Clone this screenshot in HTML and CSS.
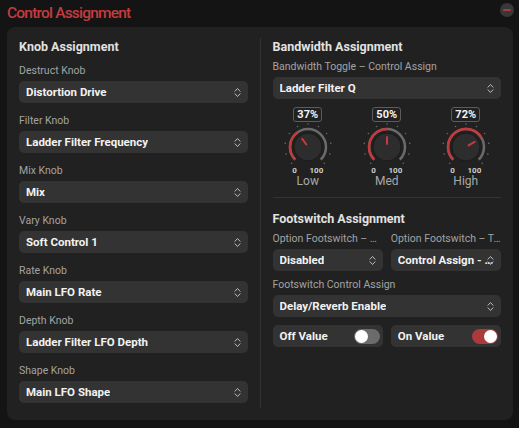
FILE: index.html
```html
<!DOCTYPE html>
<html lang="en">
<head>
<meta charset="utf-8">
<title>Control Assignment</title>
<link rel="stylesheet" href="styles.css">
</head>
<body>
<div class="window">
  <header class="titlebar">
    <h1 class="title">Control Assignment</h1>
    <button class="close" aria-label="Close"><span class="close-bar"></span></button>
  </header>

  <main class="panel">
    <section class="col">
      <h2 class="heading heading-knobs">Knob Assignment</h2>

      <div class="field">
        <label class="label">Destruct Knob</label>
        <div class="select"><span class="select-text">Distortion Drive</span><svg class="chev" viewBox="0 0 7 11"><path d="M1 4.2 L3.5 1.5 L6 4.2 M1 6.8 L3.5 9.5 L6 6.8"/></svg></div>
      </div>
      <div class="field">
        <label class="label">Filter Knob</label>
        <div class="select"><span class="select-text">Ladder Filter Frequency</span><svg class="chev" viewBox="0 0 7 11"><path d="M1 4.2 L3.5 1.5 L6 4.2 M1 6.8 L3.5 9.5 L6 6.8"/></svg></div>
      </div>
      <div class="field">
        <label class="label">Mix Knob</label>
        <div class="select"><span class="select-text">Mix</span><svg class="chev" viewBox="0 0 7 11"><path d="M1 4.2 L3.5 1.5 L6 4.2 M1 6.8 L3.5 9.5 L6 6.8"/></svg></div>
      </div>
      <div class="field">
        <label class="label">Vary Knob</label>
        <div class="select"><span class="select-text">Soft Control 1</span><svg class="chev" viewBox="0 0 7 11"><path d="M1 4.2 L3.5 1.5 L6 4.2 M1 6.8 L3.5 9.5 L6 6.8"/></svg></div>
      </div>
      <div class="field">
        <label class="label">Rate Knob</label>
        <div class="select"><span class="select-text">Main LFO Rate</span><svg class="chev" viewBox="0 0 7 11"><path d="M1 4.2 L3.5 1.5 L6 4.2 M1 6.8 L3.5 9.5 L6 6.8"/></svg></div>
      </div>
      <div class="field">
        <label class="label">Depth Knob</label>
        <div class="select"><span class="select-text">Ladder Filter LFO Depth</span><svg class="chev" viewBox="0 0 7 11"><path d="M1 4.2 L3.5 1.5 L6 4.2 M1 6.8 L3.5 9.5 L6 6.8"/></svg></div>
      </div>
      <div class="field">
        <label class="label">Shape Knob</label>
        <div class="select"><span class="select-text">Main LFO Shape</span><svg class="chev" viewBox="0 0 7 11"><path d="M1 4.2 L3.5 1.5 L6 4.2 M1 6.8 L3.5 9.5 L6 6.8"/></svg></div>
      </div>
    </section>

    <div class="vrule"></div>

    <section class="col">
      <h2 class="heading heading-bw">Bandwidth Assignment</h2>
      <div class="field">
        <label class="label">Bandwidth Toggle – Control Assign</label>
        <div class="select"><span class="select-text">Ladder Filter Q</span><svg class="chev" viewBox="0 0 7 11"><path d="M1 4.2 L3.5 1.5 L6 4.2 M1 6.8 L3.5 9.5 L6 6.8"/></svg></div>
      </div>

      <div class="dials">
        <div class="dial">
          <div class="dial-value">37%</div>
          <svg class="dial-svg" viewBox="0 0 54 44">
            <g class="ticks">
              <circle cx="10.74" cy="40.26" r="0.8"/><circle cx="5.12" cy="31.11" r="0.8"/><circle cx="4.28" cy="20.4" r="0.8"/><circle cx="8.39" cy="10.48" r="0.8"/><circle cx="16.56" cy="3.51" r="0.8"/><circle cx="27" cy="1" r="0.8"/><circle cx="37.44" cy="3.51" r="0.8"/><circle cx="45.61" cy="10.48" r="0.8"/><circle cx="49.72" cy="20.4" r="0.8"/><circle cx="48.88" cy="31.11" r="0.8"/><circle cx="43.26" cy="40.26" r="0.8"/>
            </g>
            <path class="track" d="M14.27 36.73 A18 18 0 1 1 39.73 36.73"/>
            <path class="fill" d="M14.27 36.73 A18 18 0 0 1 16.65 9.27"/>
            <circle class="body" cx="27" cy="24" r="14"/>
            <line class="needle" x1="25.27" y1="21.55" x2="21.25" y2="15.82"/>
          </svg>
          <div class="dial-scale"><span>0</span><span>100</span></div>
          <div class="dial-name">Low</div>
        </div>
        <div class="dial">
          <div class="dial-value">50%</div>
          <svg class="dial-svg" viewBox="0 0 54 44">
            <g class="ticks">
              <circle cx="10.74" cy="40.26" r="0.8"/><circle cx="5.12" cy="31.11" r="0.8"/><circle cx="4.28" cy="20.4" r="0.8"/><circle cx="8.39" cy="10.48" r="0.8"/><circle cx="16.56" cy="3.51" r="0.8"/><circle cx="27" cy="1" r="0.8"/><circle cx="37.44" cy="3.51" r="0.8"/><circle cx="45.61" cy="10.48" r="0.8"/><circle cx="49.72" cy="20.4" r="0.8"/><circle cx="48.88" cy="31.11" r="0.8"/><circle cx="43.26" cy="40.26" r="0.8"/>
            </g>
            <path class="track" d="M14.27 36.73 A18 18 0 1 1 39.73 36.73"/>
            <path class="fill" d="M14.27 36.73 A18 18 0 0 1 27 6"/>
            <circle class="body" cx="27" cy="24" r="14"/>
            <line class="needle" x1="27" y1="21" x2="27" y2="14"/>
          </svg>
          <div class="dial-scale"><span>0</span><span>100</span></div>
          <div class="dial-name">Med</div>
        </div>
        <div class="dial">
          <div class="dial-value">72%</div>
          <svg class="dial-svg" viewBox="0 0 54 44">
            <g class="ticks">
              <circle cx="10.74" cy="40.26" r="0.8"/><circle cx="5.12" cy="31.11" r="0.8"/><circle cx="4.28" cy="20.4" r="0.8"/><circle cx="8.39" cy="10.48" r="0.8"/><circle cx="16.56" cy="3.51" r="0.8"/><circle cx="27" cy="1" r="0.8"/><circle cx="37.44" cy="3.51" r="0.8"/><circle cx="45.61" cy="10.48" r="0.8"/><circle cx="49.72" cy="20.4" r="0.8"/><circle cx="48.88" cy="31.11" r="0.8"/><circle cx="43.26" cy="40.26" r="0.8"/>
            </g>
            <path class="track" d="M14.27 36.73 A18 18 0 1 1 39.73 36.73"/>
            <path class="fill" d="M14.27 36.73 A18 18 0 1 1 42.5 14.84"/>
            <circle class="body" cx="27" cy="24" r="14"/>
            <line class="needle" x1="29.58" y1="22.47" x2="35.61" y2="18.91"/>
          </svg>
          <div class="dial-scale"><span>0</span><span>100</span></div>
          <div class="dial-name">High</div>
        </div>
      </div>

      <hr class="hrule">

      <h2 class="heading heading-fs">Footswitch Assignment</h2>
      <div class="pair pair-selects">
        <div class="field">
          <label class="label">Option Footswitch – Mode</label>
          <div class="select"><span class="select-text">Disabled</span><svg class="chev" viewBox="0 0 7 11"><path d="M1 4.2 L3.5 1.5 L6 4.2 M1 6.8 L3.5 9.5 L6 6.8"/></svg></div>
        </div>
        <div class="field">
          <label class="label">Option Footswitch – Tap</label>
          <div class="select"><span class="select-text">Control Assign - Latch</span><svg class="chev" viewBox="0 0 7 11"><path d="M1 4.2 L3.5 1.5 L6 4.2 M1 6.8 L3.5 9.5 L6 6.8"/></svg></div>
        </div>
      </div>
      <div class="field field-fs">
        <label class="label">Footswitch Control Assign</label>
        <div class="select"><span class="select-text">Delay/Reverb Enable</span><svg class="chev" viewBox="0 0 7 11"><path d="M1 4.2 L3.5 1.5 L6 4.2 M1 6.8 L3.5 9.5 L6 6.8"/></svg></div>
      </div>
      <div class="pair pair-toggles">
        <div class="toggle-row"><span>Off Value</span><span class="switch"><span class="switch-knob"></span></span></div>
        <div class="toggle-row"><span>On Value</span><span class="switch is-on"><span class="switch-knob"></span></span></div>
      </div>
    </section>
  </main>
</div>
</body>
</html>
```

FILE: styles.css
```css
* {
  box-sizing: border-box;
}

html, body {
  margin: 0;
  padding: 0;
}

body {
  width: 519px;
  height: 428px;
  overflow: hidden;
  background: #141414;
  font-family: Roboto, "Noto Sans", sans-serif;
  color: #ececec;
}

.titlebar {
  height: 27px;
  display: flex;
  justify-content: space-between;
  align-items: flex-start;
  padding: 0 5px 0 7px;
}

.title {
  margin: 0;
  font-size: 15.5px;
  line-height: 27px;
  font-weight: 500;
  letter-spacing: -0.8px;
  color: #c43c3f;
}

.close {
  margin-top: 3px;
  width: 14px;
  height: 14px;
  border: 0;
  padding: 0;
  border-radius: 50%;
  background: #383838;
  display: flex;
  align-items: center;
  justify-content: center;
}

.close-bar {
  width: 8px;
  height: 2px;
  background: #a93a3d;
  border-radius: 1px;
}

.panel {
  margin: 0 6px 0 7px;
  background: #212121;
  border-radius: 8px;
  padding: 12px 12px 17px 12px;
  display: grid;
  grid-template-columns: 1fr 1px 1fr;
  column-gap: 12px;
}

.col {
  min-width: 0;
  display: flex;
  flex-direction: column;
}

.vrule {
  background: #333333;
  margin-top: -1px;
  margin-bottom: -5px;
}

.heading {
  margin: 0;
  font-size: 12.5px;
  line-height: 16px;
  font-weight: 700;
  color: #e2e2e2;
}

.heading-knobs {
  margin-bottom: 9px;
}

.heading-knobs ~ .field {
  margin-bottom: 11px;
}

.heading-knobs ~ .field:last-child {
  margin-bottom: 0;
}

.heading-bw {
  margin-bottom: 5px;
}

.field {
  display: flex;
  flex-direction: column;
  min-width: 0;
}

.label {
  display: block;
  font-size: 10.5px;
  line-height: 14px;
  color: #a3a3a3;
  margin-bottom: 3px;
  white-space: nowrap;
  overflow: hidden;
  text-overflow: ellipsis;
}

.select {
  position: relative;
  height: 22px;
  background: #333333;
  border-radius: 5px;
  padding: 0 3px 0 7px;
  display: flex;
  align-items: center;
  font-size: 11.5px;
  font-weight: 700;
  color: #f2f2f2;
}

.select-text {
  white-space: nowrap;
  overflow: hidden;
  text-overflow: ellipsis;
}

.chev {
  position: absolute;
  right: 7px;
  top: 5.5px;
  width: 7px;
  height: 11px;
  fill: none;
  stroke: #bdbdbd;
  stroke-width: 1;
  stroke-linecap: round;
  stroke-linejoin: round;
}

/* rotary dials */
.dials {
  margin-top: 8px;
  display: grid;
  grid-template-columns: repeat(3, 79px);
  justify-content: center;
}

.dial {
  display: flex;
  flex-direction: column;
  align-items: center;
}

.dial-value {
  height: 15px;
  padding: 0 3px;
  min-width: 27px;
  border: 1px solid #5c5c5c;
  border-radius: 3px;
  font-size: 11px;
  line-height: 13px;
  font-weight: 700;
  color: #f4f4f4;
  text-align: center;
}

.dial-svg {
  margin-top: 1px;
  width: 54px;
  height: 44px;
  display: block;
}

.ticks circle {
  fill: #6a6a6a;
}

.track {
  fill: none;
  stroke: #6b6b6b;
  stroke-width: 2.5;
}

.fill {
  fill: none;
  stroke: #c23b3e;
  stroke-width: 2.5;
}

.body {
  fill: #2d2d2d;
  stroke: #1b1b1b;
  stroke-width: 1;
}

.needle {
  stroke: #c23b3e;
  stroke-width: 2;
  stroke-linecap: round;
}

.dial-scale {
  margin-top: -1px;
  width: 31px;
  display: flex;
  justify-content: space-between;
  font-size: 8px;
  line-height: 9px;
  font-weight: 700;
  color: #cfcfcf;
}

.dial-name {
  font-size: 12px;
  line-height: 13px;
  color: #a8a8a8;
}

.hrule {
  margin: 9px 0 0 0;
  border: 0;
  height: 1px;
  background: #333333;
}

.heading-fs {
  margin-top: 13px;
}

.pair {
  display: grid;
  grid-template-columns: 1fr 1fr;
  column-gap: 8px;
}

.pair-selects {
  margin-top: 5px;
}

.field-fs {
  margin-top: 7px;
}

.pair-toggles {
  margin-top: 8px;
}

.toggle-row {
  height: 22px;
  background: #333333;
  border-radius: 5px;
  padding: 0 3px 0 7px;
  display: flex;
  align-items: center;
  justify-content: space-between;
  font-size: 11.5px;
  font-weight: 700;
  color: #f2f2f2;
}

.switch {
  width: 26px;
  height: 15px;
  border-radius: 8px;
  background: #6b6b6b;
  padding: 1px;
  display: flex;
  justify-content: flex-start;
}

.switch.is-on {
  background: #ab3a3d;
  justify-content: flex-end;
}

.switch-knob {
  width: 13px;
  height: 13px;
  border-radius: 50%;
  background: #ffffff;
}
```
